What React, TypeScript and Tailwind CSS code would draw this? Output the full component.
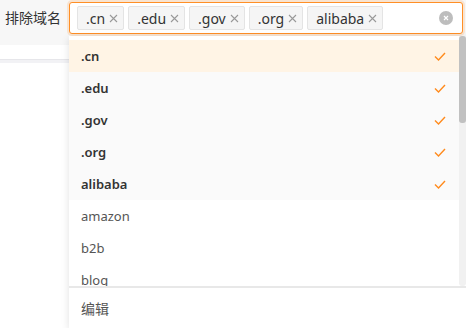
import React from "react";

const tags = [".cn", ".edu", ".gov", ".org", "alibaba"];

const options = [
  { label: ".cn", selected: true },
  { label: ".edu", selected: true },
  { label: ".gov", selected: true },
  { label: ".org", selected: true },
  { label: "alibaba", selected: true },
  { label: "amazon", selected: false },
  { label: "b2b", selected: false },
  { label: "blog", selected: false },
];

function CloseIcon() {
  return (
    <svg width="9" height="9" viewBox="0 0 9 9" className="text-[#999]">
      <path d="M1 1 L8 8 M8 1 L1 8" stroke="currentColor" strokeWidth="1.1" fill="none" />
    </svg>
  );
}

function Check() {
  return (
    <svg width="12" height="10" viewBox="0 0 12 10">
      <path d="M1 4.5 L4.5 8 L11 1" stroke="#ff8a1c" strokeWidth="1.4" fill="none" />
    </svg>
  );
}

export default function App() {
  return (
    <div
      className="relative w-[466px] h-[328px] overflow-hidden bg-white text-[13px] text-[#333]"
      style={{ fontFamily: '"Segoe UI", "Noto Sans", "Noto Sans CJK SC", sans-serif' }}
    >
      {/* header strip */}
      <div className="h-[45px] bg-[#f7f7f7] flex items-start pt-[2px]">
        <div className="w-[69px] pl-[5px] h-[31px] flex items-center text-[14px] text-[#333]">排除域名</div>
        <div className="flex-1 mr-[3px] h-[32px] rounded-[3px] border border-[#ff8f26] bg-white shadow-[0_0_0_2px_rgba(255,143,38,0.18)] flex items-center pl-[7px] pr-[9px] gap-[4px]">
          {tags.map((t) => (
            <div
              key={t}
              className="h-[24px] flex items-center gap-[4px] pl-[8px] pr-[5px] rounded-[2px] border border-[#e4e4e4] bg-[#f5f5f5] text-[14px] text-[#333]"
            >
              <span>{t}</span>
              <CloseIcon />
            </div>
          ))}
          <div className="flex-1" />
          <div className="w-[14px] h-[14px] rounded-full bg-[#bdbdbd] flex items-center justify-center">
            <svg width="6" height="6" viewBox="0 0 6 6">
              <path d="M1 1 L5 5 M5 1 L1 5" stroke="#fff" strokeWidth="1.2" fill="none" />
            </svg>
          </div>
        </div>
      </div>
      <div className="h-[14px] bg-white" />
      <div className="h-[4px] bg-[#f2f2f5] border-t border-[#e6e6ea]" />

      {/* dropdown */}
      <div className="absolute left-[69px] top-[36px] w-[397px] h-[292px] bg-white shadow-[0_2px_8px_rgba(0,0,0,0.12)] flex flex-col">
        <div className="h-[250px] flex overflow-hidden">
          <div className="flex-1 pt-[4px] overflow-hidden">
            {options.map((o, i) => (
              <div
                key={o.label}
                className={
                  "h-[32px] shrink-0 flex items-center justify-between pl-[12px] pr-[13px] pt-[2px] text-[13px] " +
                  (i === 0 ? "bg-[#fff4e5] " : o.selected ? "bg-[#fafafa] " : "bg-white ") +
                  (o.selected ? "font-semibold text-[#333]" : "text-[#555]")
                }
              >
                <span>{o.label}</span>
                {o.selected && <Check />}
              </div>
            ))}
          </div>
          <div className="w-[7px] bg-[#f1f1f1] rounded-b-[3px]">
            <div className="h-[87px] bg-[#c1c1c1] rounded-[3px]" />
          </div>
        </div>
        <div className="flex-1 border-t-2 border-[#e8e8e8] flex items-center pl-[12px] text-[14px] text-[#555]">
          编辑
        </div>
      </div>
    </div>
  );
}
